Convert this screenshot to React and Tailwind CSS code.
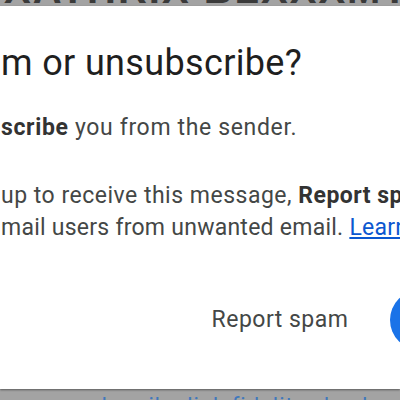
export default function App() {
  return (
    <div
      className="w-[400px] h-[400px] overflow-hidden bg-[#a3a3a3] flex flex-col"
      style={{ fontFamily: "Roboto, 'Noto Sans', sans-serif" }}
    >
      {/* dimmed page behind the dialog (top) */}
      <div className="h-[6px] shrink-0 overflow-hidden">
        <div
          className="mt-[-31px] text-[40px] leading-[40px] font-bold text-[#3a3a3a] whitespace-nowrap pl-[4px] tracking-[2px]"
          style={{ fontFamily: "'Liberation Sans', Arial, sans-serif" }}
        >
          XATHRIX BLXXXMT
        </div>
      </div>

      {/* dialog */}
      <div className="h-[383px] shrink-0 bg-white shadow-[0_1px_2px_rgba(0,0,0,0.45)] flex flex-col pl-[1px] whitespace-nowrap">
        <div className="pt-[35px] text-[36px] leading-[44px] text-[#1f1f1f] tracking-[0.35px]">
          m or unsubscribe?
        </div>
        <div className="mt-[27px] text-[23px] leading-[32px] text-[#444746] tracking-[0.65px]">
          <span className="font-bold text-[#333]">scribe</span> you from the sender.
        </div>
        <div className="mt-[36px] text-[23px] leading-[32px] text-[#444746]">
          <div className="tracking-[0.5px]">
            up to receive this message, <span className="font-bold text-[#333]">Report spam</span>
          </div>
          <div className="tracking-[0.25px]">
            mail users from unwanted email.{" "}
            <span className="text-[#0b57d0] underline underline-offset-2">Learn more</span>
          </div>
        </div>
        <div className="mt-[46px] flex items-center">
          <div className="ml-[189px] w-[180px] h-[60px] shrink-0 flex items-center justify-center text-[23px] leading-[32px] text-[#444746] tracking-[0.5px]">
            Report spam
          </div>
          <div className="ml-[20px] w-[160px] h-[60px] rounded-full bg-[#1a73e8] shrink-0" />
        </div>
      </div>

      {/* dimmed page behind the dialog (bottom) */}
      <div className="flex-1 overflow-hidden">
        <div className="pl-[50px] mt-[6px] text-[22px] leading-[22px] text-[#3f78bd] whitespace-nowrap tracking-[1px]">
          unsubscribe link fidelity check
        </div>
      </div>
    </div>
  );
}
